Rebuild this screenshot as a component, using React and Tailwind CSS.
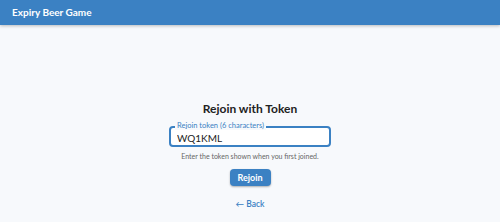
import React, { useState } from 'react';

export default function App() {
  const [token, setToken] = useState('WQ1KML');

  return (
    <div className="w-[500px] h-[222px] bg-[#f7f9fc] flex flex-col" style={{ fontFamily: 'Lato, "Liberation Sans", sans-serif' }}>
      {/* Header */}
      <div className="h-[25px] bg-[#3b81c3] shadow-[0_1px_3px_rgba(0,0,0,0.25)] flex items-center px-[12px]">
        <span className="text-white text-[10px] font-bold">Expiry Beer Game</span>
      </div>

      {/* Body */}
      <div className="flex-1 flex flex-col items-center pt-[76px]">
        <h1 className="text-[12px] font-bold text-[#222] leading-[16px]">Rejoin with Token</h1>

        <div className="relative mt-[9px] w-[162px]">
          <input
            value={token}
            onChange={(e) => setToken(e.target.value)}
            className="block w-full h-[21px] border-2 border-[#3b81c3] rounded-[4px] bg-white px-[6px] pt-[2px] text-[10px] text-[#222] outline-none"
          />
          <span className="absolute left-[6px] -top-[5px] px-[2px] bg-[#f7f9fc] text-[7.5px] leading-[9px] text-[#3b81c3]">
            Rejoin token (6 characters)
          </span>
        </div>

        <p className="mt-[4px] text-[7px] text-[#666] leading-[10px]">Enter the token shown when you first joined.</p>

        <button className="mt-[8px] h-[17px] w-[41px] rounded-[4px] bg-[#3b81c3] text-white text-[9px] font-bold leading-none shadow-[0_1px_2px_rgba(0,0,0,0.3)]">
          Rejoin
        </button>

        <a className="mt-[14px] text-[8.5px] text-[#3b81c3] font-semibold leading-none">← Back</a>
      </div>
    </div>
  );
}
